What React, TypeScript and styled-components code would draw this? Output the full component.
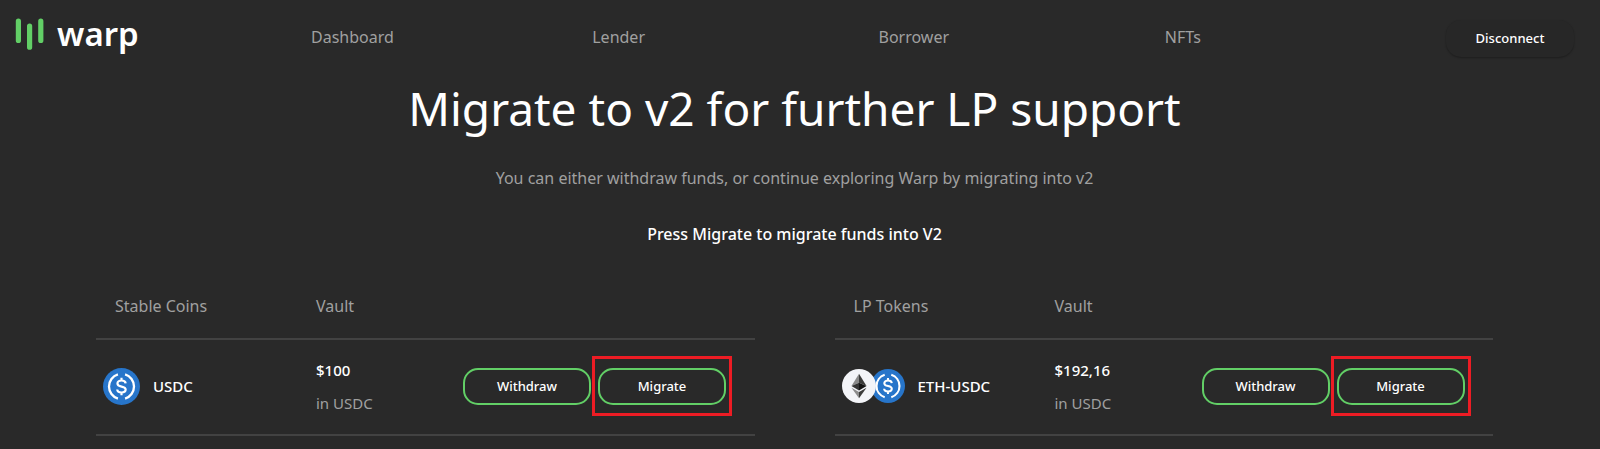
import React from "react";
import styled, { createGlobalStyle } from "styled-components";

const GlobalStyle = createGlobalStyle`
  * { box-sizing: border-box; }
  body {
    margin: 0;
    background: #292929;
    color: #fff;
    font-family: "Noto Sans", "Open Sans", sans-serif;
    font-size: 16px;
    line-height: 24px;
  }
`;

const muted = "#a0a0a0";
const green = "#62cf66";

const Header = styled.header`
  display: flex;
  align-items: center;
  height: 76px;
  padding: 0 26px 0 15px;
`;

const Logo = styled.a`
  display: flex;
  align-items: center;
  gap: 12px;
  width: 296px;
  flex: none;
  padding-bottom: 8px;
  color: #fff;
  font-size: 33px;
  font-weight: 600;
  line-height: 40px;
  text-decoration: none;
`;

const Nav = styled.nav`
  flex: 1;
  display: grid;
  grid-template-columns: 281fr 286fr 286fr 281fr;
  padding-bottom: 2px;
`;

const NavLink = styled.a`
  justify-self: start;
  color: ${muted};
  text-decoration: none;
`;

const Button = styled.button<{ $outlined?: boolean }>`
  width: 128px;
  height: 37px;
  padding: 0;
  border: ${(p) => (p.$outlined ? `2px solid ${green}` : "0")};
  border-radius: 15px;
  background: ${(p) => (p.$outlined ? "transparent" : "#272727")};
  box-shadow: ${(p) => (p.$outlined ? "none" : "0 1px 2px rgba(0, 0, 0, 0.3)")};
  color: #fff;
  font-family: inherit;
  font-size: 13px;
  font-weight: 500;
  line-height: 20px;
  cursor: pointer;
`;

const Intro = styled.section`
  display: flex;
  flex-direction: column;
  align-items: center;
  padding-right: 11px;
  text-align: center;
`;

const Title = styled.h1`
  margin: 0;
  font-size: 46px;
  font-weight: 400;
  line-height: 64px;
`;

const Subtitle = styled.p`
  margin: 26px 0 0;
  color: ${muted};
`;

const Prompt = styled.p`
  margin: 32px 0 0;
  font-weight: 500;
`;

const Vaults = styled.main`
  display: grid;
  grid-template-columns: 1fr 1fr;
  gap: 80px;
  padding: 28px 107px 0 96px;
`;

const Table = styled.table`
  width: 100%;
  border-collapse: separate;
  border-spacing: 0;
  table-layout: fixed;

  th,
  td {
    padding: 0;
    border-bottom: 2px solid #424242;
    text-align: left;
  }
`;

const HeadCell = styled.th<{ $inset?: boolean; $width?: number }>`
  height: 66px;
  width: ${(p) => (p.$width ? `${p.$width}px` : "auto")};
  color: ${muted};
  font-weight: 400;

  && {
    padding-left: ${(p) => (p.$inset ? "19px" : "0")};
  }
`;

const Cell = styled.td`
  height: 96px;

  && {
    padding-bottom: 2px;
  }
`;

const Asset = styled.div`
  display: flex;
  align-items: center;
  gap: 13px;
  padding-left: 7px;
  font-size: 15px;
  font-weight: 500;
`;

const Coins = styled.div`
  display: flex;

  svg + svg {
    margin-left: -5px;
  }
  svg:first-child {
    z-index: 1;
  }
`;

const Amount = styled.div`
  margin-bottom: 9px;
  font-size: 15px;
  font-weight: 500;
`;

const Unit = styled.div`
  color: ${muted};
  font-size: 15px;
`;

const Actions = styled.div`
  display: flex;
  gap: 7px;
`;

const Highlight = styled.div`
  position: relative;
  display: flex;

  &::after {
    content: "";
    position: absolute;
    inset: -12px -6px -11px;
    border: 3px solid #ed1c24;
    pointer-events: none;
  }
`;

const LogoMark = () => (
  <svg width="30" height="34" viewBox="0 0 30 34" fill="none" stroke={green} strokeWidth="5.2" strokeLinecap="round" aria-hidden="true">
    <path d="M3.4 4.2V23.4M14.6 9V30.2M25.8 4.2V23.4" />
  </svg>
);

const UsdcIcon = ({ size }: { size: number }) => (
  <svg width={size} height={size} viewBox="0 0 32 32" fill="none" aria-hidden="true">
    <circle cx="16" cy="16" r="16" fill="#2775ca" />
    <path d="M12.9 5.5a11 11 0 0 0 0 21M19.1 5.5a11 11 0 0 1 0 21" stroke="#fff" strokeWidth="2" />
    <path
      d="M19.6 13.2c-.2-1.6-1.5-2.4-3.6-2.4s-3.5 1-3.5 2.5c0 4 7.1 1.5 7.1 5.4 0 1.6-1.4 2.5-3.6 2.5s-3.6-.9-3.7-2.6M16 8.5v2.3M16 21.2v2.3"
      stroke="#fff"
      strokeWidth="1.9"
    />
  </svg>
);

const EthIcon = ({ size }: { size: number }) => (
  <svg width={size} height={size} viewBox="0 0 33 33" aria-hidden="true">
    <circle cx="16.5" cy="16.5" r="16.5" fill="#f3f4f8" />
    <path d="M16.5 4.5 9.2 16.6l7.3-3.3Z" fill="#8a8a8a" />
    <path d="m16.5 4.5 7.3 12.1-7.3-3.3Z" fill="#3c3c3b" />
    <path d="m9.2 16.6 7.3-3.3v7.6Z" fill="#343434" />
    <path d="m23.8 16.6-7.3-3.3v7.6Z" fill="#141414" />
    <path d="m9.2 18.1 7.3 4.3v5.9Z" fill="#8c8c8c" />
    <path d="m23.8 18.1-7.3 4.3v5.9Z" fill="#3c3c3b" />
  </svg>
);

interface VaultProps {
  heading: string;
  asset: string;
  amount: string;
  icons: React.ReactNode;
}

const VaultTable = ({ heading, asset, amount, icons }: VaultProps) => (
  <Table>
    <thead>
      <tr>
        <HeadCell scope="col" $inset $width={220}>{heading}</HeadCell>
        <HeadCell scope="col" $width={147}>Vault</HeadCell>
        <HeadCell as="td" />
      </tr>
    </thead>
    <tbody>
      <tr>
        <Cell>
          <Asset>
            <Coins>{icons}</Coins>
            {asset}
          </Asset>
        </Cell>
        <Cell>
          <Amount>{amount}</Amount>
          <Unit>in USDC</Unit>
        </Cell>
        <Cell>
          <Actions>
            <Button type="button" $outlined>Withdraw</Button>
            <Highlight>
              <Button type="button" $outlined>Migrate</Button>
            </Highlight>
          </Actions>
        </Cell>
      </tr>
    </tbody>
  </Table>
);

export default function App() {
  return (
    <>
      <GlobalStyle />
      <Header>
        <Logo href="#">
          <LogoMark />
          warp
        </Logo>
        <Nav>
          <NavLink href="#dashboard">Dashboard</NavLink>
          <NavLink href="#lender">Lender</NavLink>
          <NavLink href="#borrower">Borrower</NavLink>
          <NavLink href="#nfts">NFTs</NavLink>
        </Nav>
        <Button type="button">Disconnect</Button>
      </Header>
      <Intro>
        <Title>Migrate to v2 for further LP support</Title>
        <Subtitle>You can either withdraw funds, or continue exploring Warp by migrating into v2</Subtitle>
        <Prompt>Press Migrate to migrate funds into V2</Prompt>
      </Intro>
      <Vaults>
        <VaultTable heading="Stable Coins" asset="USDC" amount="$100" icons={<UsdcIcon size={37} />} />
        <VaultTable
          heading="LP Tokens"
          asset="ETH-USDC"
          amount="$192,16"
          icons={
            <>
              <EthIcon size={34} />
              <UsdcIcon size={34} />
            </>
          }
        />
      </Vaults>
    </>
  );
}
